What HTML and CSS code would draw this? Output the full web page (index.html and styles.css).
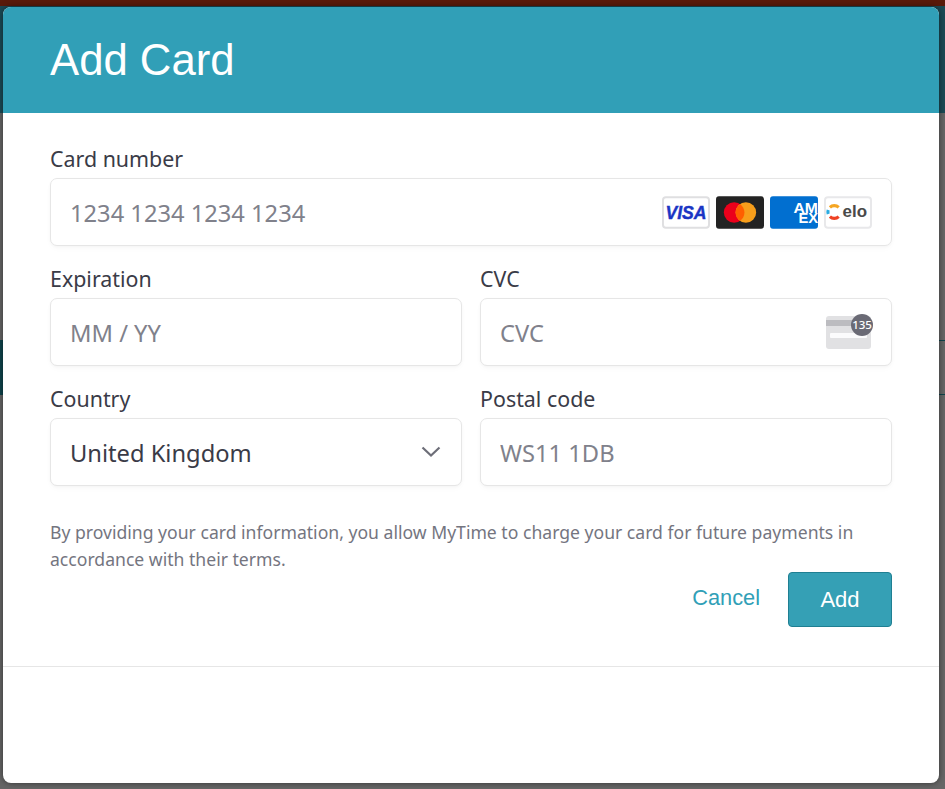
FILE: index.html
```html
<!DOCTYPE html>
<html lang="en">
<head>
    <meta charset="UTF-8">
    <meta name="viewport" content="width=device-width, initial-scale=1.0">
    <title>Add Card</title>
    <link rel="stylesheet" href="styles.css">
</head>
<body>
    <div class="modal">
        <!-- Header -->
        <div class="modal-header">Add Card</div>

        <div class="modal-body">
            <!-- Card form -->
            <form class="card-form">
                <div class="form-item wide">
                    <label for="cardNumber">Card number</label>
                    <div class="field">
                        <input id="cardNumber" type="text" placeholder="1234 1234 1234 1234">
                        <div class="brands">
                            <svg class="brand" viewBox="0 0 49 33">
                                <rect x="1" y="1" width="47" height="31" rx="3" fill="#fff" stroke="#dfdfe1" stroke-width="2"/>
                                <text x="24.500" y="23" text-anchor="middle" class="visa-text">VISA</text>
                            </svg>
                            <svg class="brand" viewBox="0 0 49 33">
                                <rect width="49" height="33" rx="3" fill="#232323"/>
                                <circle cx="18.500" cy="16.500" r="10.500" fill="#eb001b"/>
                                <circle cx="30.500" cy="16.500" r="10.500" fill="#f79e1b"/>
                                <path d="M24.500 7.880A10.500 10.500 0 0 1 24.500 25.120A10.500 10.500 0 0 1 24.500 7.880z" fill="#ff5f00"/>
                            </svg>
                            <svg class="brand" viewBox="0 0 49 33">
                                <rect width="49" height="33" rx="3" fill="#016fd0"/>
                                <text x="24" y="17" textLength="25" lengthAdjust="spacingAndGlyphs" class="amex-text">AM</text>
                                <text x="29" y="27.500" textLength="20" lengthAdjust="spacingAndGlyphs" class="amex-text">EX</text>
                            </svg>
                            <svg class="brand" viewBox="0 0 49 33">
                                <rect x="1" y="1" width="47" height="31" rx="3" fill="#fff" stroke="#e8e8ea" stroke-width="2"/>
                                <path d="M6 11.300A6.500 6.500 0 0 1 15 11.300" fill="none" stroke="#f5a623" stroke-width="3.200"/>
                                <path d="M4.300 14A6.500 6.500 0 0 0 4.300 18" fill="none" stroke="#29abe2" stroke-width="3.200"/>
                                <path d="M6 20.700A6.500 6.500 0 0 0 15 20.700" fill="none" stroke="#ef4123" stroke-width="3.200"/>
                                <text x="19" y="21.500" textLength="25" lengthAdjust="spacingAndGlyphs" class="elo-text">elo</text>
                            </svg>
                        </div>
                    </div>
                </div>

                <div class="form-item">
                    <label for="expiration">Expiration</label>
                    <div class="field">
                        <input id="expiration" type="text" placeholder="MM / YY">
                    </div>
                </div>

                <div class="form-item">
                    <label for="cvc">CVC</label>
                    <div class="field">
                        <input id="cvc" type="text" placeholder="CVC">
                        <div class="cvc-icon">
                            <svg width="45" height="34" viewBox="0 0 45 34">
                                <rect x="0" y="1" width="45" height="33" rx="3" fill="#e1e1e3"/>
                                <rect x="0" y="5" width="45" height="6" fill="#bcbcc0"/>
                                <rect x="4" y="18" width="37" height="5" rx="1" fill="#fbfbfc"/>
                            </svg>
                            <span class="cvc-badge">135</span>
                        </div>
                    </div>
                </div>

                <div class="form-item">
                    <label for="country">Country</label>
                    <div class="field">
                        <select id="country">
                            <option>United Kingdom</option>
                        </select>
                        <svg class="chevron" width="20" height="12" viewBox="0 0 20 12">
                            <path d="M1.500 1.500L10 9.500L18.500 1.500" fill="none" stroke="#6d6e78" stroke-width="2.200"/>
                        </svg>
                    </div>
                </div>

                <div class="form-item">
                    <label for="postal">Postal code</label>
                    <div class="field">
                        <input id="postal" type="text" placeholder="WS11 1DB">
                    </div>
                </div>
            </form>

            <p class="terms">By providing your card information, you allow MyTime to charge your card for future payments in accordance with their terms.</p>

            <!-- Buttons -->
            <div class="actions">
                <a href="#" class="cancel">Cancel</a>
                <button type="button" class="button">Add</button>
            </div>
        </div>

        <div class="modal-footer"></div>
    </div>
</body>
</html>
```

FILE: styles.css
```css
html, body {
    height: 100%;
}
body {
    margin: 0;
    box-sizing: border-box;
    padding: 7px 6px 6px 3px;
    overflow: hidden;
    font-family: "Noto Sans", "Open Sans", sans-serif;
    background-color: #666;
    background-repeat: no-repeat;
    background-size: 10px 100%, 100% 100%;
    background-position: left top, left top;
    background-image:
        linear-gradient(
            to bottom,
            #5a1a0a 0, #5a1a0a 6px,
            #1b4a55 6px, #1b4a55 113px,
            #666 113px, #666 340px,
            #0f444c 340px, #0f444c 395px,
            #666 395px
        ),
        linear-gradient(
            to bottom,
            #5a1a0a 0, #5a1a0a 6px,
            #1b4a55 6px, #1b4a55 113px,
            #666 113px, #666 340px,
            #0f444c 340px, #0f444c 341px,
            #666 341px, #666 394px,
            #0f444c 394px, #0f444c 395px,
            #666 395px
        );
}
.modal {
    display: flex;
    flex-direction: column;
    height: 100%;
    background-color: #fff;
    border-radius: 8px;
    overflow: hidden;
    box-shadow: 0 0 6px rgba(0, 0, 0, 0.5);
}
.modal-header {
    height: 106px;
    flex-shrink: 0;
    box-sizing: border-box;
    padding: 29px 47px 0;
    background-color: #319fb7;
    color: #fff;
    font-family: "Liberation Sans", Arial, sans-serif;
    font-size: 43.7px;
    line-height: 48px;
}
.modal-body {
    padding: 35px 47px 0 47px;
    height: 554px;
    box-sizing: border-box;
    flex-shrink: 0;
    border-bottom: 1px solid #e6e6e6;
}
.card-form {
    display: grid;
    grid-template-columns: minmax(0, 1fr) minmax(0, 1fr);
    column-gap: 18px;
    row-gap: 22px;
}
.form-item {
    display: flex;
    flex-direction: column;
}
.form-item.wide {
    grid-column: 1 / 3;
}
.form-item label {
    height: 30px;
    line-height: 22px;
    font-size: 21.4px;
    color: #3a3b47;
}
.field {
    display: flex;
    align-items: center;
    height: 68px;
    box-sizing: border-box;
    padding: 0 20px 0 19px;
    background-color: #fff;
    border: 1px solid #e6e6e6;
    border-radius: 7px;
    box-shadow: 0 1px 3px rgba(0, 0, 0, 0.03), 0 3px 6px rgba(0, 0, 0, 0.02);
}
.field input,
.field select {
    flex: 1;
    min-width: 0;
    height: 100%;
    box-sizing: border-box;
    padding: 2px 0 0 0;
    border: none;
    outline: none;
    background: none;
    appearance: none;
    font-family: inherit;
    font-size: 23.7px;
    color: #3a3b47;
}
.field input::placeholder {
    color: #80818b;
    opacity: 1;
}
.brands {
    display: flex;
    gap: 6px;
    margin-right: -1px;
}
.brand {
    display: block;
    width: 48px;
    height: 33px;
}
.visa-text {
    font-family: "Liberation Sans", Arial, sans-serif;
    font-size: 18px;
    font-weight: bold;
    font-style: italic;
    fill: #1a35c4;
    stroke: #1a35c4;
    stroke-width: 0.4px;
}
.amex-text {
    font-family: "Liberation Sans", Arial, sans-serif;
    font-size: 15px;
    font-weight: bold;
    fill: #fff;
}
.elo-text {
    font-family: "Liberation Sans", Arial, sans-serif;
    font-size: 16px;
    font-weight: bold;
    fill: #4a4a4a;
}
.cvc-icon {
    position: relative;
    height: 34px;
    width: 45px;
}
.cvc-icon svg {
    display: block;
}
.cvc-badge {
    position: absolute;
    top: -1px;
    right: -2px;
    width: 22px;
    height: 22px;
    border-radius: 50%;
    background-color: #6a6a75;
    color: #fff;
    font-size: 11.5px;
    font-weight: 500;
    line-height: 22px;
    text-align: center;
}
.chevron {
    display: block;
}
.terms {
    margin: 33px 0 0;
    font-size: 17.6px;
    line-height: 27px;
    color: #74757f;
}
.actions {
    display: flex;
    justify-content: flex-end;
    align-items: center;
    gap: 28px;
    margin-top: -1px;
}
.cancel {
    color: #319fb7;
    font-family: "Liberation Sans", Arial, sans-serif;
    font-size: 21.8px;
    text-decoration: none;
    margin-bottom: 3px;
}
.button {
    width: 104px;
    height: 55px;
    padding: 0;
    background-color: #35a0b5;
    border: 1px solid #1f7f92;
    border-radius: 4px;
    color: #fff;
    font-family: "Liberation Sans", Arial, sans-serif;
    font-size: 22px;
}
```
